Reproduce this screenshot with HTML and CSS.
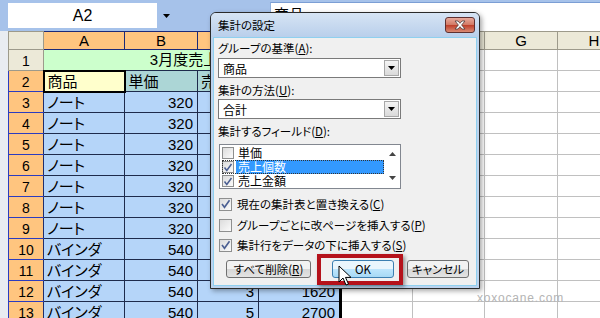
FILE: index.html
```html
<!DOCTYPE html>
<html lang="ja">
  <head>
    <meta charset="UTF-8" />
    <title>集計の設定</title>
    <link rel="stylesheet" href="styles.css">
  </head>
  <body>
    <div class="app">

      <!-- name box + formula bar -->
      <div class="bar">
        <div class="namebox">A2</div>
        <div class="namedrop"><svg width="7" height="4" viewBox="0 0 7 4"><path d="M0 0h7L3.5 4z" fill="#000"/></svg></div>
        <div class="formula">商品</div>
      </div>

      <div class="sheet">
        <table class="grid">
          <colgroup>
            <col class="c-rh"><col class="c-a"><col class="c-b"><col class="c-c"><col class="c-d">
            <col class="c-e"><col class="c-f"><col class="c-g"><col class="c-h">
          </colgroup>
          <tr class="hd">
            <th class="corner"></th><th class="sel">A</th><th class="sel">B</th><th class="sel">C</th><th class="sel">D</th>
            <th>E</th><th>F</th><th>G</th><th>H</th>
          </tr>
          <tr>
            <th class="rh">1</th><td class="title" colspan="4">3月度売上表</td>
            <td></td><td></td><td></td><td></td>
          </tr>
          <tr>
            <th class="rh sel">2</th><td class="head active">商品</td><td class="head">単価</td><td class="head">売上個数</td><td class="head end">売上金額</td>
            <td></td><td></td><td></td><td></td>
          </tr>
          <tr><th class="rh sel">3</th><td class="on">ノート</td><td class="on num">320</td><td class="on num">4</td><td class="on num end">1280</td><td></td><td></td><td></td><td></td></tr>
          <tr><th class="rh sel">4</th><td class="on">ノート</td><td class="on num">320</td><td class="on num">2</td><td class="on num end">640</td><td></td><td></td><td></td><td></td></tr>
          <tr><th class="rh sel">5</th><td class="on">ノート</td><td class="on num">320</td><td class="on num">6</td><td class="on num end">1920</td><td></td><td></td><td></td><td></td></tr>
          <tr><th class="rh sel">6</th><td class="on">ノート</td><td class="on num">320</td><td class="on num">3</td><td class="on num end">960</td><td></td><td></td><td></td><td></td></tr>
          <tr><th class="rh sel">7</th><td class="on">ノート</td><td class="on num">320</td><td class="on num">5</td><td class="on num end">1600</td><td></td><td></td><td></td><td></td></tr>
          <tr><th class="rh sel">8</th><td class="on">ノート</td><td class="on num">320</td><td class="on num">2</td><td class="on num end">640</td><td></td><td></td><td></td><td></td></tr>
          <tr><th class="rh sel">9</th><td class="on">ノート</td><td class="on num">320</td><td class="on num">4</td><td class="on num end">1280</td><td></td><td></td><td></td><td></td></tr>
          <tr><th class="rh sel">10</th><td class="on">バインダ</td><td class="on num">540</td><td class="on num">2</td><td class="on num end">1080</td><td></td><td></td><td></td><td></td></tr>
          <tr><th class="rh sel">11</th><td class="on">バインダ</td><td class="on num">540</td><td class="on num">4</td><td class="on num end">2160</td><td></td><td></td><td></td><td></td></tr>
          <tr><th class="rh sel">12</th><td class="on">バインダ</td><td class="on num">540</td><td class="on num">3</td><td class="on num end">1620</td><td></td><td></td><td></td><td></td></tr>
          <tr><th class="rh sel">13</th><td class="on">バインダ</td><td class="on num">540</td><td class="on num">5</td><td class="on num end">2700</td><td></td><td></td><td></td><td></td></tr>
        </table>
      </div>

      <!-- subtotal dialog -->
      <div class="dlg">
        <div class="dlg-title">
          <span>集計の設定</span>
          <span class="close">
            <svg width="14" height="10" viewBox="0 0 14 10"><path d="M2 1h3l2 2.3L9 1h3L8.6 5 12 9H9L7 6.7 5 9H2l3.4-4z" fill="#fff" stroke="#4a3a3a" stroke-width=".8"/></svg>
          </span>
        </div>
        <div class="dlg-body">
          <div class="lbl">グループの基準(<u>A</u>):</div>
          <div class="combo"><span>商品</span><i class="drop"><svg width="7" height="4" viewBox="0 0 7 4"><path d="M0 0h7L3.5 4z" fill="#000"/></svg></i></div>

          <div class="lbl gap">集計の方法(<u>U</u>):</div>
          <div class="combo near"><span>合計</span><i class="drop"><svg width="7" height="4" viewBox="0 0 7 4"><path d="M0 0h7L3.5 4z" fill="#000"/></svg></i></div>

          <div class="lbl gap">集計するフィールド(<u>D</u>):</div>
          <div class="list">
            <div class="items">
              <div class="item"><span class="cb small"></span><span class="txt">単価</span></div>
              <div class="item cur"><span class="cb small on"><svg width="10" height="9" viewBox="0 0 10 9"><path d="M1.5 4.5l2.3 3L8.5 1" fill="none" stroke="#4b5f92" stroke-width="1.5"/></svg></span><span class="txt">売上個数</span></div>
              <div class="item"><span class="cb small on"><svg width="10" height="9" viewBox="0 0 10 9"><path d="M1.5 4.5l2.3 3L8.5 1" fill="none" stroke="#4b5f92" stroke-width="1.5"/></svg></span><span class="txt">売上金額</span></div>
            </div>
            <div class="vscroll">
              <svg width="7" height="4" viewBox="0 0 7 4"><path d="M0 4h7L3.5 0z" fill="#444"/></svg>
              <svg width="7" height="4" viewBox="0 0 7 4"><path d="M0 0h7L3.5 4z" fill="#444"/></svg>
            </div>
          </div>

          <div class="opt first"><span class="cb on"><svg width="11" height="10" viewBox="0 0 11 10"><path d="M2 5l2.5 3.3L9.5 1.2" fill="none" stroke="#4b5f92" stroke-width="1.6"/></svg></span>現在の集計表と置き換える(<u>C</u>)</div>
          <div class="opt"><span class="cb"></span>グループごとに改ページを挿入する(<u>P</u>)</div>
          <div class="opt tight"><span class="cb on"><svg width="11" height="10" viewBox="0 0 11 10"><path d="M2 5l2.5 3.3L9.5 1.2" fill="none" stroke="#4b5f92" stroke-width="1.6"/></svg></span>集計行をデータの下に挿入する(<u>S</u>)</div>

          <div class="btns">
            <span class="btn wide">すべて削除(<u>R</u>)</span>
            <span class="btn hot">OK</span>
            <span class="btn">キャンセル</span>
          </div>
        </div>
      </div>

      <div class="mark-box"></div>
      <svg class="pointer" width="13" height="21" viewBox="0 0 13 21"><path d="M1 1v16l4-4 3 7 2.5-1-3-6.6H13z" fill="#fff" stroke="#000" stroke-width="1"/></svg>
      <div class="watermark">xoxocane.com</div>
    </div>
  </body>
</html>
```

FILE: styles.css
```css
body {
  margin: 0;
  font-family: "Liberation Sans", "Noto Sans CJK JP", sans-serif;
}

.app {
  position: relative;
  width: 600px;
  height: 318px;
  overflow: hidden;
  background: #a6c2ea;
}

/* formula bar */
.bar {
  display: flex;
  height: 31px;
}
.namebox {
  width: 149px;
  margin: 3px 0 3px 8px;
  background: #fff;
  font-size: 16px;
  line-height: 25px;
  text-align: center;
}
.namedrop {
  width: 19px;
  display: flex;
  align-items: center;
  justify-content: center;
}
.formula {
  flex: 1;
  margin: 2px 0 0 94px;
  padding: 1px 0 0 3px;
  background: #fff;
  border-top: 1px solid #7b9ed4;
  border-left: 1px solid #8fb0de;
  font-family: "Noto Sans CJK JP", sans-serif;
  font-size: 15px;
  line-height: 20px;
}

/* worksheet */
.sheet {
  padding-left: 8px;
  background: #e9ecf1;
  height: 287px;
}
.grid {
  border-collapse: collapse;
  table-layout: fixed;
  width: 622px;
  font-size: 15px;
}
.c-rh { width: 35px; }
.c-a { width: 81px; }
.c-b { width: 73px; }
.c-c { width: 61px; }
.c-d { width: 82px; }
.c-e, .c-f { width: 72px; }
.c-g, .c-h { width: 73px; }

.grid tr { height: 21px; }
.grid tr.hd { height: 18px; }

.grid th {
  background: #ece9d8;
  border: 1px solid #9d9a8b;
  font-weight: normal;
  font-size: 15px;
  line-height: 16px;
  padding: 0;
  color: #000;
}
.grid th.sel {
  background: #ffc57f;
  border-color: #1c2a78;
}
.grid th.rh {
  font-size: 14px;
  padding-top: 2px;
}
.grid th.rh.sel {
  border-color: #2b3cc0;
  border-right-color: #1f2d6c;
}

.grid td {
  background: #fff;
  border: 1px solid #c0c0c0;
  padding: 1px 4px 0 3px;
  line-height: 18px;
  white-space: nowrap;
  overflow: hidden;
  font-feature-settings: "palt";
}
.grid td.title {
  background: #ccffcc;
  text-align: center;
  border-bottom: 1px solid #1e2b4c;
}
.grid td.head {
  background: #acd6d6;
  border: 1px solid #1e2b4c;
}
.grid td.active {
  background: #ffffcc;
  border: 2px solid #000;
}
.grid td.on {
  background: #b5d5f9;
  border: 1px solid #1e2b4c;
}
.grid td.num {
  text-align: right;
}
.grid td.end {
  border-right: 3px solid #000;
}

/* dialog */
.dlg {
  position: absolute;
  left: 210px;
  top: 12px;
  width: 270px;
  height: 277px;
  box-sizing: border-box;
  border: 1px solid #2a2a2a;
  border-radius: 6px 6px 0 0;
  background: #bcd3ee;
  box-shadow: 2px 2px 5px rgba(0, 0, 0, 0.35);
  display: flex;
  flex-direction: column;
  font-family: "Noto Sans CJK JP", sans-serif;
  font-size: 11.5px;
  font-feature-settings: "palt";
  color: #000;
}
.dlg-title {
  height: 24px;
  display: flex;
  justify-content: space-between;
  align-items: flex-start;
  padding: 0 4px 0 7px;
  background: linear-gradient(#d6e4f4, #b9cfeb);
  border-radius: 5px 5px 0 0;
}
.dlg-title span:first-child {
  line-height: 24px;
}
.close {
  margin-top: 4px;
  width: 30px;
  height: 16px;
  box-sizing: border-box;
  border: 1px solid #5e3030;
  border-radius: 3px;
  background: linear-gradient(#e8aa9c, #d27a66 48%, #bf3f2a 52%, #d98a74);
  display: flex;
  align-items: center;
  justify-content: center;
}

.dlg-body {
  flex: 1;
  margin: 0 2px 2px;
  background: #f0f0f0;
  border: 1px solid #8fd0ef;
  padding: 3px 0 0 4px;
  display: flex;
  flex-direction: column;
  align-items: flex-start;
}
.lbl {
  line-height: 14px;
}
.lbl.gap { margin-top: 5px; }

.combo {
  margin-top: 3px;
  width: 183px;
  height: 20px;
  box-sizing: border-box;
  border: 1px solid #7a7a7a;
  background: #fff;
  display: flex;
  align-items: center;
  justify-content: space-between;
  padding-left: 4px;
  font-size: 12px;
}
.combo.near { margin-top: 2px; }
.drop {
  width: 15px;
  height: 16px;
  margin-right: 1px;
  box-sizing: border-box;
  border: 1px solid #a8a8a8;
  background: linear-gradient(#f4f4f4, #dadada);
  display: flex;
  align-items: center;
  justify-content: center;
}

.list {
  margin: 6px 0 0 1px;
  width: 182px;
  height: 45px;
  box-sizing: border-box;
  border: 1px solid #828790;
  background: #fff;
  display: flex;
}
.items {
  flex: 1;
  padding: 1px 0 0 2px;
}
.item {
  height: 14px;
  display: flex;
  align-items: center;
  font-size: 12px;
}
.item .txt {
  flex: 1;
  margin-left: 2px;
  padding-left: 2px;
  line-height: 14px;
}
.item.cur {
  outline: 1px dotted #333;
  outline-offset: -1px;
}
.item.cur .txt {
  background: #3399ff;
  color: #fff;
}
.vscroll {
  width: 16px;
  display: flex;
  flex-direction: column;
  align-items: center;
  justify-content: space-between;
  padding: 7px 0 8px;
}

.cb {
  width: 13px;
  height: 13px;
  box-sizing: border-box;
  border: 1px solid #8e8f8f;
  background: linear-gradient(135deg, #dcdcdc, #fbfbfb);
  display: inline-flex;
  align-items: center;
  justify-content: center;
  flex: none;
}
.cb.small {
  width: 12px;
  height: 12px;
}

.opt {
  margin: 7px 0 0 1px;
  display: flex;
  align-items: center;
  line-height: 14px;
  height: 14px;
}
.opt.first { margin-top: 8px; }
.opt.tight { margin-top: 6px; }
.opt .cb { margin-right: 5px; }

.btns {
  margin: 8px 0 0 8px;
  display: flex;
}
.btn {
  width: 62px;
  height: 18px;
  box-sizing: border-box;
  border: 1px solid #707070;
  border-radius: 3px;
  background: linear-gradient(#f2f2f2 50%, #d6d6d6 50%, #e3e3e3);
  text-align: center;
  line-height: 16px;
  margin-left: 13px;
}
.btn.wide {
  width: 85px;
  margin-left: 0;
}
.btn.hot {
  margin-left: 21px;
  border-color: #3c7fb1;
  background: linear-gradient(#eaf6fd 50%, #bee6fd 50%, #a7d9f5);
}

/* red highlight + pointer on top */
.mark-box {
  position: absolute;
  left: 317px;
  top: 254px;
  width: 86px;
  height: 31px;
  box-sizing: border-box;
  border: 4px solid #b5121b;
  box-shadow: 2px 2px 4px rgba(0, 0, 0, 0.4);
}
.pointer {
  position: absolute;
  left: 338px;
  top: 265px;
}
.watermark {
  position: absolute;
  left: 477px;
  top: 291px;
  font-size: 12px;
  letter-spacing: 0.8px;
  color: #b4b4b4;
}
```
